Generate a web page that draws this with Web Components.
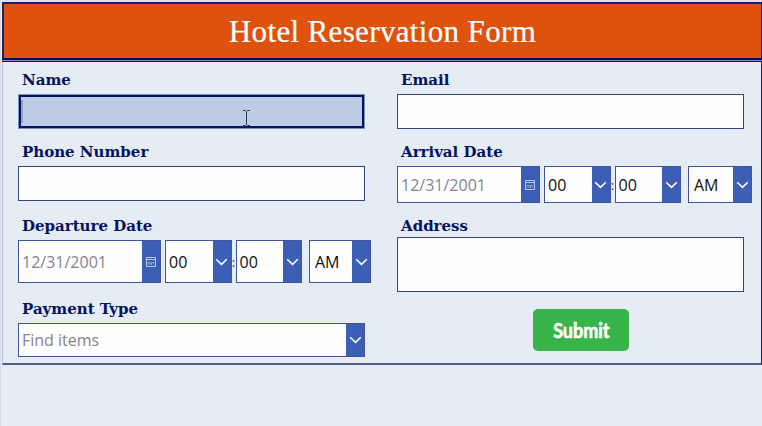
<!DOCTYPE html>
<html lang="en">
<head>
<meta charset="utf-8">
<title>Hotel Reservation Form</title>
<style>
  body {
    margin: 0;
    background: #e5ecf4;
    overflow: hidden;
  }
</style>
</head>
<body>
<reservation-form></reservation-form>

<script>
(function () {
  'use strict';

  // Attach an open shadow root and fill it
  function shadow(el, html) {
    el.attachShadow({ mode: 'open' }).innerHTML = html;
  }

  /**
   * <form-field label="..."> - label above a slotted control
   */
  class FormField extends HTMLElement {
    connectedCallback() {
      shadow(this, `
        <style>
          :host { display: block; }
          .label {
            height: var(--label-height, 23px);
            padding-left: 4px;
            box-sizing: border-box;
            font: bold 15px/18px "DejaVu Serif", serif;
            color: #04125f;
            white-space: nowrap;
          }
        </style>
        <div class="label">${this.getAttribute('label')}</div>
        <slot></slot>
      `);
    }
  }

  /**
   * <text-box> - single or multi line input; "focused" shows the caret
   */
  class TextBox extends HTMLElement {
    connectedCallback() {
      shadow(this, `
        <style>
          :host {
            display: flex;
            box-sizing: border-box;
            height: 35px;
            border: 1px solid #36437f;
            background: #fefefe;
          }
          :host([focused]) {
            border: 3px solid #001468;
            outline: 1px solid #7f92bd;
            outline-offset: -1px;
            background: #bbcce4;
            padding: 3px 0;
          }
          .caret { display: none; width: 2px; background: #9a9fc3; }
          :host([focused]) .caret { display: block; }
        </style>
        <div class="caret"></div>
      `);
    }
  }

  /**
   * <pick-box value="..." icon="chevron|calendar"> - text with a blue button
   */
  class PickBox extends HTMLElement {
    connectedCallback() {
      const calendar = this.getAttribute('icon') === 'calendar';
      const icon = calendar
        ? `<svg width="10" height="10" viewBox="0 0 10 10" fill="none" stroke="#bac7ee">
             <path d="M.5.5h9v9h-9zM.5 2.500h9"/>
             <path d="M2 7.500V5.500h2V8M5.500 8V5.500h2V7" stroke-width=".7"/>
           </svg>`
        : `<svg width="13" height="8" viewBox="0 0 13 8" fill="none" stroke="#fff" stroke-width="1.5">
             <path d="M1.200 1.200l5.300 5.200 5.300-5.200"/>
           </svg>`;
      shadow(this, `
        <style>
          :host {
            display: flex;
            flex-shrink: 0;
            box-sizing: border-box;
            border: 1px solid #4353a0;
            background: #fefefe;
            font: 16px "Open Sans", sans-serif;
            color: #101010;
            white-space: nowrap;
          }
          :host([placeholder]) { color: #84848c; }
          .value {
            flex: 1;
            display: flex;
            align-items: center;
            padding-left: var(--pad, 3px);
          }
          .button {
            width: 18px;
            background: #3c5fb5;
            display: flex;
            align-items: center;
            justify-content: center;
          }
        </style>
        <div class="value">${this.getAttribute('value')}</div>
        <div class="button">${icon}</div>
      `);
    }
  }

  /**
   * <date-time> - date, hour, minute and AM/PM pickers in a row
   */
  class DateTime extends HTMLElement {
    connectedCallback() {
      shadow(this, `
        <style>
          :host { display: flex; }
          .date { width: 143px; margin-right: 4px; }
          .part { width: var(--part-width, 67px); }
          .period { width: var(--period-width, 62px); margin-left: 7px; --pad: 5px; }
          .colon {
            flex-shrink: 0;
            width: 4px;
            display: flex;
            align-items: center;
            justify-content: center;
            font: 13px "Open Sans", sans-serif;
            color: #30345c;
          }
        </style>
        <pick-box class="date" value="12/31/2001" icon="calendar" placeholder></pick-box>
        <pick-box class="part" value="00"></pick-box>
        <span class="colon">:</span>
        <pick-box class="part" value="00"></pick-box>
        <pick-box class="period" value="AM"></pick-box>
      `);
    }
  }

  class SubmitButton extends HTMLElement {
    connectedCallback() {
      shadow(this, `
        <style>
          :host {
            display: flex;
            align-items: center;
            justify-content: center;
            box-sizing: border-box;
            width: 96px;
            height: 42px;
            border-radius: 5px;
            background: #39b44a;
            color: #fff;
            font: bold 20px Lato, sans-serif;
          }
          span {
            transform: scaleX(.9);
            -webkit-text-stroke: .6px #fff;
          }
        </style>
        <span><slot></slot></span>
      `);
    }
  }

  class ReservationForm extends HTMLElement {
    connectedCallback() {
      shadow(this, `
        <style>
          :host { display: block; height: 426px; border-left: 1px solid #dedee2; box-sizing: border-box; }
          .strip { height: 2px; background: #e2e1e7; }
          header {
            height: 56px;
            box-sizing: border-box;
            margin-left: 1px;
            border: 2px solid #1b216b;
            border-width: 2px 1px 0 2px;
            background: #df520e;
            color: #fff;
            font: 31px/55px "Liberation Serif", serif;
            letter-spacing: .35px;
            -webkit-text-stroke: .2px #fff;
            text-align: center;
          }
          .rule {
            height: 1px;
            margin-left: 1px;
            border: solid #001268;
            border-width: 2px 0 1px;
            background: #7587bd;
          }
          main {
            display: flex;
            gap: 32px;
            height: 303px;
            box-sizing: border-box;
            margin-left: 1px;
            padding: 8px 0 0 15px;
            border: solid #b4c1df;
            border-width: 0 1px 2px;
            border-right-color: #24265a;
            border-bottom-color: #53608f;
          }
          .col { width: 347px; }
          form-field:first-child { padding-top: 1px; }
          .phone, .arrival { margin-top: 14px; }
          .departure { margin-top: 16px; }
          .payment { margin-top: 17px; }
          .address { margin-top: 14px; --label-height: 20px; }
          .departure date-time { height: 43px; }
          .arrival date-time { height: 37px; --period-width: 64px; }
          .departure date-time { --part-width: 66.500px; }
          .arrival date-time { --part-width: 66.500px; }
          .address text-box { height: 55px; }
          .payment pick-box { height: 34px; }
          submit-button { margin: 17px 0 0 136px; }
          .cursor { position: absolute; left: 242px; top: 110px; }
        </style>
        <div class="strip"></div>
        <header>Hotel Reservation Form</header>
        <div class="rule"></div>
        <main>
          <div class="col">
            <form-field label="Name"><text-box focused></text-box></form-field>
            <form-field class="phone" label="Phone Number"><text-box></text-box></form-field>
            <form-field class="departure" label="Departure Date"><date-time></date-time></form-field>
            <form-field class="payment" label="Payment Type">
              <pick-box value="Find items" placeholder></pick-box>
            </form-field>
          </div>
          <div class="col">
            <form-field label="Email"><text-box></text-box></form-field>
            <form-field class="arrival" label="Arrival Date"><date-time></date-time></form-field>
            <form-field class="address" label="Address"><text-box></text-box></form-field>
            <submit-button>Submit</submit-button>
          </div>
        </main>
        <svg class="cursor" width="9" height="16" viewBox="0 0 9 16" fill="none" stroke="#333450">
          <path d="M1 .5h2.500l1 1 1-1H8M4.500 1v14M1 15.500h2.500l1-1 1 1H8"/>
        </svg>
      `);
    }
  }

  customElements.define('form-field', FormField);
  customElements.define('text-box', TextBox);
  customElements.define('pick-box', PickBox);
  customElements.define('date-time', DateTime);
  customElements.define('submit-button', SubmitButton);
  customElements.define('reservation-form', ReservationForm);
})();
</script>
</body>
</html>
